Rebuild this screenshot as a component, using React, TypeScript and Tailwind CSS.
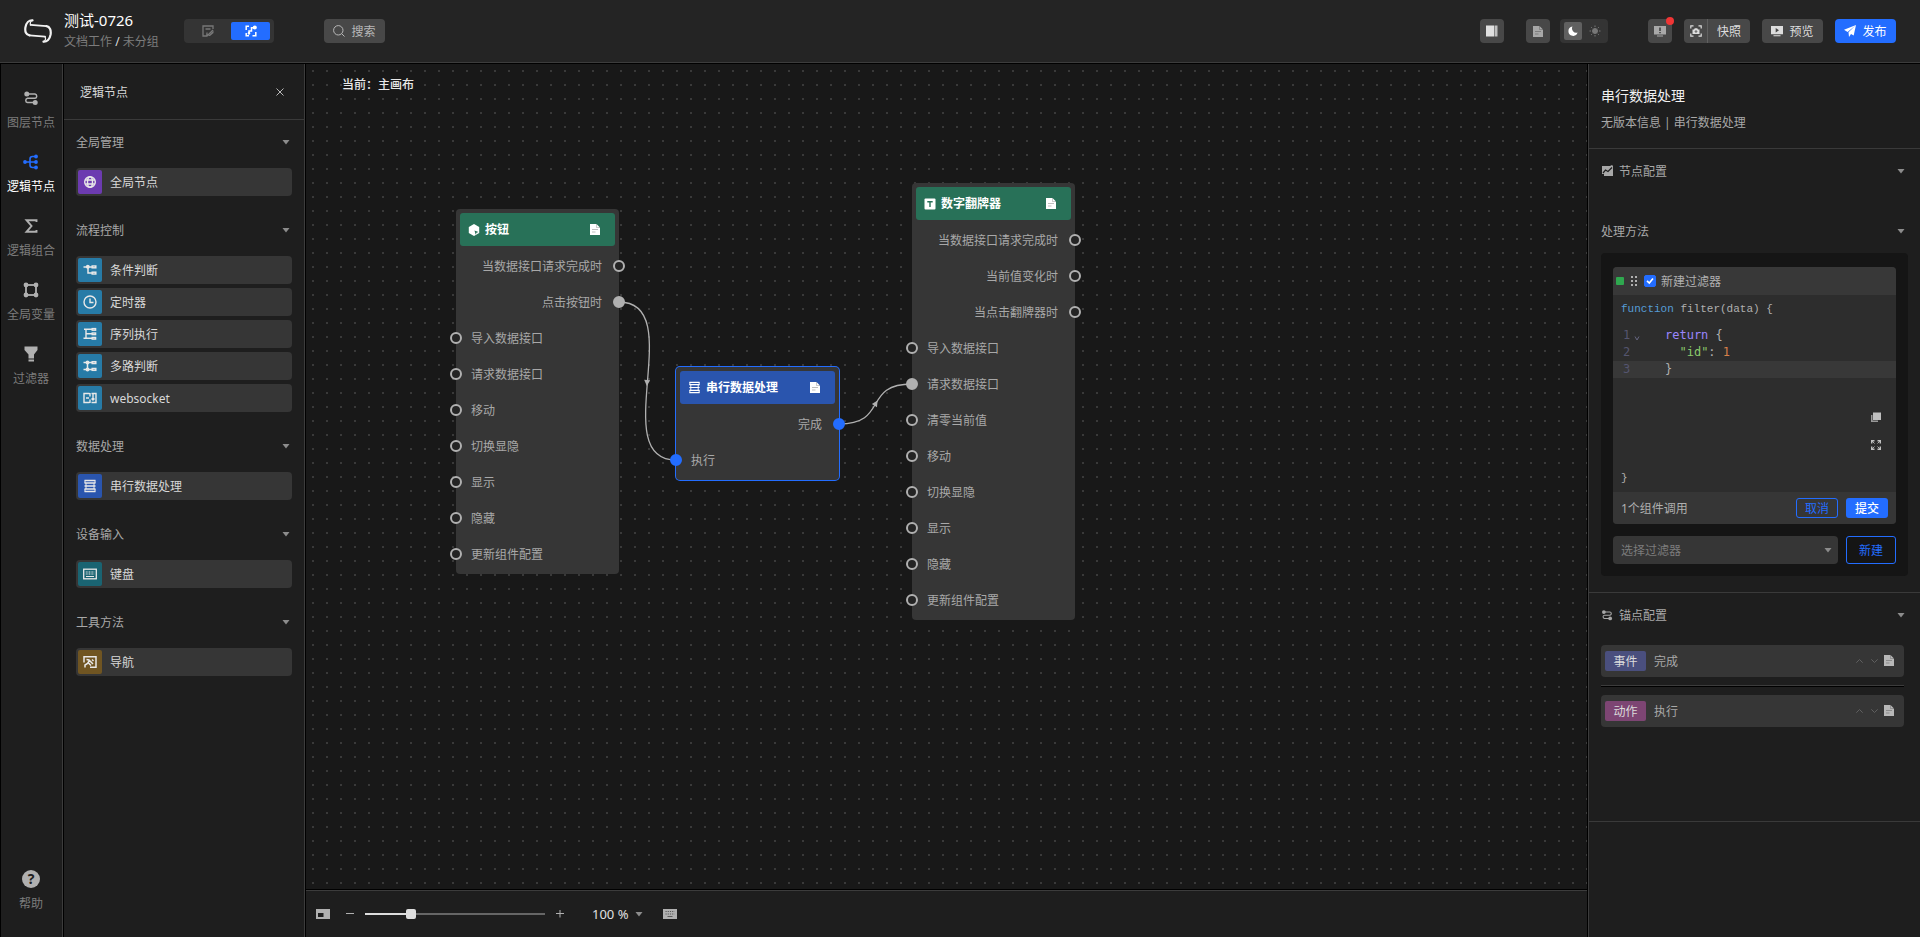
import { useState } from "react";
import type { ReactNode } from "react";

type IconProps = { className?: string };

interface PaletteItem {
  label: string;
  icon: ReactNode;
}

interface PaletteGroup {
  title: string;
  color: string;
  items: PaletteItem[];
}

interface Port {
  label: string;
  linked?: boolean;
}

interface FlowNodeProps {
  title: string;
  icon: ReactNode;
  place: string;
  headerClass: string;
  selected?: boolean;
  outputs: Port[];
  inputs: Port[];
}

/* ---------- icons ---------- */

function Logo({ className }: IconProps) {
  return (
    <svg viewBox="0 0 28 24" className={className} fill="none" stroke="#f2f2f2" strokeLinecap="round">
      <path d="M8.500 1.300C5 1 2.200 4 1.400 8.500C.8 12.500 2 15.800 5.500 16.300" strokeWidth="2.200" />
      <path d="M19.500 22.700C23 23 25.800 20 26.600 15.500C27.200 11.500 26 7.600 22.500 7.200" strokeWidth="2.200" />
      <path d="M5.500 16.300L21 17.600M22.500 7.200L6.500 5.800" strokeWidth="1.700" />
      <path d="M8.500 1.300C6.500 2.200 6 4 6.500 5.800M19.500 22.700C21.500 21.800 21.800 19.500 21 17.600" strokeWidth="1.200" />
    </svg>
  );
}

function DocIcon({ className }: IconProps) {
  return (
    <svg viewBox="0 0 10 11" className={className}>
      <path d="M0 0H6.500L10 3.500V11H0Z" fill="currentColor" />
      <path d="M6.500 0V3.500H10" fill="none" stroke="#000" strokeOpacity=".25" strokeWidth=".8" />
      <path d="M2 5.500H8M2 8H5.500" stroke="#000" strokeOpacity=".25" strokeWidth="1" />
    </svg>
  );
}

function Caret({ className = "text-[#8c8c8c]" }: IconProps) {
  return (
    <svg viewBox="0 0 8 5" className={`h-[5px] w-2 shrink-0 ${className}`}>
      <path d="M.500 0H7.500L4 4.500Z" fill="currentColor" />
    </svg>
  );
}

function LayersIcon({ className }: IconProps) {
  return (
    <svg viewBox="0 0 16 16" className={className} fill="none" stroke="currentColor" strokeWidth="1.500">
      <path d="M3 4H12A2.200 2.200 0 0 1 12 8.300H4.500A2.200 2.200 0 0 0 4.500 12.600H12" />
      <circle cx="3.800" cy="4" r="2.500" fill="currentColor" stroke="none" />
      <circle cx="12.200" cy="12.500" r="2.500" fill="currentColor" stroke="none" />
    </svg>
  );
}

function LogicIcon({ className }: IconProps) {
  return (
    <svg viewBox="0 0 16 16" className={className} fill="none" stroke="currentColor" strokeWidth="1.600">
      <path d="M2 8H13M13 2.500H9.500Q7 2.500 7 5V11Q7 13.500 9.500 13.500H13" />
      <g fill="currentColor" stroke="none">
        <circle cx="2" cy="8" r="1.900" />
        <circle cx="13" cy="2.500" r="1.900" />
        <circle cx="13" cy="8" r="1.900" />
        <circle cx="13" cy="13.500" r="1.900" />
      </g>
    </svg>
  );
}

function SigmaIcon({ className }: IconProps) {
  return (
    <svg viewBox="0 0 16 16" className={className} fill="none" stroke="currentColor" strokeWidth="1.900">
      <path d="M13.500 4V2.200H3.500L8.500 8L3.500 13.800H13.500V12" />
    </svg>
  );
}

function FrameIcon({ className }: IconProps) {
  return (
    <svg viewBox="0 0 16 16" className={className} fill="none" stroke="currentColor" strokeWidth="1.800">
      <rect x="3" y="3" width="10" height="10" />
      <g fill="currentColor" stroke="none">
        <circle cx="3" cy="3" r="2.400" />
        <circle cx="13" cy="3" r="2.400" />
        <circle cx="3" cy="13" r="2.400" />
        <circle cx="13" cy="13" r="2.400" />
      </g>
    </svg>
  );
}

function FunnelIcon({ className }: IconProps) {
  return (
    <svg viewBox="0 0 16 16" className={className} fill="currentColor">
      <path d="M1.500 .500H14.500V4L11 8.500V12.500H5.500V8.500L1.500 4Z" />
      <path d="M5.500 13.500H11V15.500H5.500Z" />
    </svg>
  );
}

function GlobeIcon({ className = "size-[14px]" }: IconProps) {
  return (
    <svg viewBox="0 0 14 14" className={className} fill="none" stroke="currentColor" strokeWidth="1.400">
      <circle cx="7" cy="7" r="5.300" />
      <ellipse cx="7" cy="7" rx="2.500" ry="5.300" />
      <path d="M2.200 5H11.800M2.200 9H11.800" />
    </svg>
  );
}

function BranchIcon({ className = "size-[14px]" }: IconProps) {
  return (
    <svg viewBox="0 0 14 14" className={className} fill="none" stroke="currentColor" strokeWidth="1.500">
      <path d="M.500 4H9M5 4V10H9" />
      <circle cx="4.800" cy="3.800" r="1.200" fill="currentColor" />
      <rect x="9.200" y="3" width="3.600" height="1.800" />
      <rect x="9.200" y="9.200" width="3.600" height="1.800" />
    </svg>
  );
}

function ClockIcon({ className = "size-[14px]" }: IconProps) {
  return (
    <svg viewBox="0 0 14 14" className={className} fill="none" stroke="currentColor" strokeWidth="1.400">
      <circle cx="7" cy="7" r="6" />
      <path d="M7 3.500V7.500H10.500" />
    </svg>
  );
}

function SequenceIcon({ className = "size-[14px]" }: IconProps) {
  return (
    <svg viewBox="0 0 14 14" className={className} fill="none" stroke="currentColor" strokeWidth="1.400">
      <path d="M1 2.300H9M.500 11.300H9M3 2.300V11.300M3 6.800H9" />
      <rect x="9.200" y="1.600" width="3.400" height="1.600" />
      <rect x="9.200" y="6" width="3.400" height="1.600" />
      <rect x="9.200" y="10.500" width="3.400" height="1.600" />
    </svg>
  );
}

function MultiIcon({ className = "size-[14px]" }: IconProps) {
  return (
    <svg viewBox="0 0 14 14" className={className} fill="none" stroke="currentColor" strokeWidth="1.500">
      <path d="M.500 3.500H9M.500 10.500H9M4.500 3.500V10.500" />
      <circle cx="4.500" cy="3.500" r="1.200" fill="currentColor" />
      <circle cx="4.500" cy="10.500" r="1.200" fill="currentColor" />
      <rect x="9.200" y="2.700" width="3.600" height="1.800" />
      <rect x="9.200" y="9.500" width="3.600" height="1.800" />
    </svg>
  );
}

function SocketIcon({ className = "size-[14px]" }: IconProps) {
  return (
    <svg viewBox="0 0 14 14" className={className} fill="none" stroke="currentColor" strokeWidth="1.400">
      <path d="M6.500 2.500H1V11.500H6.500M7 2V5.500M7 8.500V12M3 7H6M8.500 2.500H13V11.500H8.500M10 3V9M8.500 7.500L10 9L11.500 7.500" />
    </svg>
  );
}

function SerialIcon({ className = "size-[14px]" }: IconProps) {
  return (
    <svg viewBox="0 0 14 14" className={className} fill="none" stroke="currentColor" strokeWidth="1.300">
      <path d="M1.500 1.500H12.500M1.500 4H12.500M1.500 7H12.500M1.500 10H12.500M1.500 12.500H12.500" />
      <path d="M2 1.500V4M12 1.500V4M2 10V12.500M12 10V12.500M3 4V10M11 4V10" strokeWidth="1" />
    </svg>
  );
}

function KeyboardIcon({ className = "size-[14px]" }: IconProps) {
  return (
    <svg viewBox="0 0 14 14" className={className} fill="none" stroke="currentColor">
      <rect x=".700" y="2.200" width="12.600" height="9.600" strokeWidth="1.300" />
      <path d="M2.800 5H11.200M2.800 7H11.200" strokeDasharray="1 .600" strokeWidth="1.100" />
      <path d="M3 9.500H11" strokeWidth="1" />
    </svg>
  );
}

function NavIcon({ className = "size-[14px]" }: IconProps) {
  return (
    <svg viewBox="0 0 14 14" className={className} fill="none" stroke="currentColor" strokeWidth="1.500">
      <path d="M1 7.500V1.800H13V12.200H7" />
      <path d="M3.500 4.500L6 5L10 9M6.500 5.500L4.500 8.500L2 10V12.500M5.500 8L8 10.500M9 4.500L10.500 6" />
    </svg>
  );
}

/* ---------- data ---------- */

const railItems = [
  { label: "图层节点", icon: <LayersIcon className="size-4" /> },
  { label: "逻辑节点", icon: <LogicIcon className="size-4" />, active: true },
  { label: "逻辑组合", icon: <SigmaIcon className="size-4" /> },
  { label: "全局变量", icon: <FrameIcon className="size-4" /> },
  { label: "过滤器", icon: <FunnelIcon className="size-4" /> },
];

const groups: PaletteGroup[] = [
  { title: "全局管理", color: "bg-[#6c3bb0]", items: [{ label: "全局节点", icon: <GlobeIcon /> }] },
  {
    title: "流程控制",
    color: "bg-[#277ba7]",
    items: [
      { label: "条件判断", icon: <BranchIcon /> },
      { label: "定时器", icon: <ClockIcon /> },
      { label: "序列执行", icon: <SequenceIcon /> },
      { label: "多路判断", icon: <MultiIcon /> },
      { label: "websocket", icon: <SocketIcon /> },
    ],
  },
  { title: "数据处理", color: "bg-[#2a55ae]", items: [{ label: "串行数据处理", icon: <SerialIcon /> }] },
  { title: "设备输入", color: "bg-[#1a6472]", items: [{ label: "键盘", icon: <KeyboardIcon /> }] },
  { title: "工具方法", color: "bg-[#705522]", items: [{ label: "导航", icon: <NavIcon /> }] },
];

const anchors = [
  { tag: "事件", name: "完成", color: "bg-[#4a4f7e]" },
  { tag: "动作", name: "执行", color: "bg-[#7d4573]" },
];

/* ---------- header ---------- */

function Header() {
  return (
    <header className="flex h-16 shrink-0 items-center border-b border-black bg-[#242424] px-6 pb-px shadow-[inset_0_-1px_0_#3c3c3c]">
      <Logo className="h-6 w-7" />
      <div className="ml-3 w-[120px]">
        <h1 className="text-[15px] leading-[22px] text-white">测试-0726</h1>
        <p className="leading-[22px] text-[#7c7c7c]">
          文档工作 <span className="text-[#ddd]">/</span> 未分组
        </p>
      </div>
      <div className="flex h-6 w-[90px] items-center rounded bg-[#343434] py-[3px] pr-1">
        <button type="button" aria-label="页面" className="flex h-full flex-1 items-center justify-center text-[#777]">
          <svg viewBox="0 0 12 12" className="size-3" fill="none" stroke="currentColor" strokeWidth="1.300">
            <path d="M11 4V1H1V11H5L11 5M3.500 4H8.500M5 7.500L4.800 11" />
            <path d="M6 11L11.500 5.500V8L8 11Z" fill="currentColor" stroke="none" />
          </svg>
        </button>
        <button type="button" aria-label="蓝图" className="flex h-full w-[39px] items-center justify-center rounded-xs bg-[#236dff] text-white">
          <svg viewBox="0 0 12 12" className="size-3" fill="none" stroke="currentColor" strokeWidth="1.500">
            <path d="M4 1.200H1.200V5M1.200 8V10.800H4M7.500 10.800H10.800V7M4 8.300V6H6.500V2.700H9" />
            <circle cx="9.800" cy="2.500" r="1.300" fill="currentColor" />
            <circle cx="4" cy="8.300" r=".600" />
          </svg>
        </button>
      </div>
      <button type="button" className="ml-[50px] flex h-6 w-[61px] items-center justify-center gap-[6px] rounded bg-[#484848] text-[#b8b8b8]">
        <svg viewBox="0 0 12 12" className="size-3" fill="none" stroke="currentColor">
          <circle cx="5.300" cy="5.300" r="4.700" />
          <path d="M8.600 8.600L11.500 11.500" />
        </svg>
        <span className="pt-0.5">搜索</span>
      </button>

      <div className="ml-auto flex h-6 items-center text-[#ddd]">
        <button type="button" aria-label="侧栏" className="flex size-6 items-center justify-center rounded bg-[#484848]">
          <svg viewBox="0 0 12 12" className="size-3">
            <path d="M0 .500H8V11.500H0Z" fill="#e0e0e0" />
            <path d="M8.500 .500H11.500V11.500H8.500Z" fill="#c0c0c0" />
          </svg>
        </button>
        <button type="button" aria-label="文档" className="ml-[22px] flex size-6 items-center justify-center rounded bg-[#484848] text-[#a8a8a8]">
          <DocIcon className="h-[11px] w-[10px]" />
        </button>
        <div className="ml-[10px] flex h-6 w-12 items-center gap-1 rounded bg-[#343434] px-1">
          <button type="button" aria-label="深色" className="flex size-[18px] items-center justify-center rounded-xs bg-[#606060] text-white">
            <svg viewBox="0 0 10 10" className="size-[10px]">
              <path d="M4.500 .500A4.700 4.700 0 1 0 9.600 6.600A4.300 4.300 0 0 1 4.500 .500Z" fill="currentColor" />
            </svg>
          </button>
          <button type="button" aria-label="浅色" className="flex size-[18px] items-center justify-center text-[#777]">
            <svg viewBox="0 0 12 12" className="size-3" stroke="currentColor">
              <circle cx="6" cy="6" r="2.500" fill="currentColor" />
              <path d="M6 .500V2M6 10V11.500M.500 6H2M10 6H11.500M2.200 2.200L3.200 3.200M8.800 8.800L9.800 9.800M9.800 2.200L8.800 3.200M3.200 8.800L2.200 9.800" />
            </svg>
          </button>
        </div>
        <button type="button" aria-label="消息" className="relative ml-10 flex size-6 items-center justify-center rounded bg-[#484848] text-[#a8a8a8]">
          <svg viewBox="0 0 12 12" className="size-3">
            <path d="M0 1H12V9.500H0ZM3 10.500H9V11.500H3Z" fill="currentColor" />
            <path d="M6 2.500V6M6 7V8.300" stroke="#333" strokeWidth="1.400" />
          </svg>
          <span className="absolute -right-[2px] -top-[2px] size-2 rounded-full bg-[#f03535]" />
        </button>
        <div className="ml-3 flex h-6 w-[66px] overflow-hidden rounded bg-[#484848]">
          <button type="button" aria-label="截图" className="flex w-6 items-center justify-center border-r border-[#606060]">
            <svg viewBox="0 0 12 12" className="size-3" fill="none" stroke="currentColor" strokeWidth="1.200">
              <path d="M.800 3.500V.800H3.500M8.500 .800H11.200V3.500M11.200 8.500V11.200H8.500M3.500 11.200H.800V8.500" />
              <path d="M2.500 4.500H4L4.700 3.300H7.300L8 4.500H9.500V9H2.500Z" fill="currentColor" stroke="none" />
              <circle cx="6" cy="6.500" r=".800" stroke="#484848" strokeWidth=".9" />
            </svg>
          </button>
          <button type="button" className="flex-1 pt-0.5">快照</button>
        </div>
        <button type="button" className="ml-3 flex h-6 w-[61px] items-center justify-center gap-[6px] rounded bg-[#484848]">
          <svg viewBox="0 0 12 12" className="size-3">
            <path d="M0 1H12V9.300H0ZM2.500 10.300H9.500V11.300H2.500Z" fill="currentColor" />
            <path d="M4.700 3L8 5.200L4.700 7.400Z" fill="#484848" />
          </svg>
          <span className="pt-0.5">预览</span>
        </button>
        <button type="button" className="ml-3 flex h-6 w-[61px] items-center justify-center gap-[6px] rounded bg-[#236dff] text-white">
          <svg viewBox="0 0 12 12" className="size-3">
            <path d="M12 0L0 4.800L3.600 7ZM12 0L4.500 7.300L5 12L7 9L9.700 10.500Z" fill="currentColor" />
          </svg>
          <span className="pt-0.5">发布</span>
        </button>
      </div>
    </header>
  );
}

/* ---------- left side ---------- */

function Rail() {
  return (
    <nav className="flex w-16 shrink-0 flex-col border-l border-r border-black bg-[#1e1e1e] pb-[25px] pr-[2px] pt-[14px] shadow-[inset_-1px_0_0_#3c3c3c]">
      {railItems.map((item) => (
        <button key={item.label} type="button" className={`flex h-16 flex-col items-center justify-center gap-[9px] leading-4 ${item.active ? "text-white" : "text-[#7c7c7c]"}`}>
          <span className={item.active ? "text-[#236dff]" : "text-[#b0b0b0]"}>{item.icon}</span>
          {item.label}
        </button>
      ))}
      <button type="button" className="mt-auto flex flex-col items-center gap-2 leading-4 text-[#7c7c7c]">
        <span className="flex size-[18px] items-center justify-center rounded-full bg-[#b0b0b0] text-sm font-bold text-[#1e1e1e]">?</span>
        帮助
      </button>
    </nav>
  );
}

function Palette() {
  return (
    <aside className="w-[242px] shrink-0 border-r border-black bg-[#1e1e1e] shadow-[inset_-1px_0_0_#3c3c3c]">
      <div className="flex h-14 items-center justify-between border-b border-[#3a3a3a] pl-4 pr-[21px]">
        <h2 className="pt-0.5 text-[#d8d8d8]">逻辑节点</h2>
        <button type="button" aria-label="关闭" className="text-[#b8b8b8]">
          <svg viewBox="0 0 8 8" className="size-2" stroke="currentColor">
            <path d="M.500 .500L7.500 7.500M7.500 .500L.500 7.500" />
          </svg>
        </button>
      </div>
      {groups.map((group) => (
        <section key={group.title} className="mb-3 px-3">
          <button type="button" className="mb-1 flex h-11 w-full items-center justify-between pr-[3px] text-[#a8a8a8]">
            <span className="pt-0.5">{group.title}</span>
            <Caret />
          </button>
          <ul className="flex w-[216px] flex-col gap-1">
            {group.items.map((item) => (
              <li key={item.label} className="flex h-7 items-center gap-2 rounded bg-[#363636] pl-[2px] text-[#d8d8d8]">
                <span className={`flex size-6 items-center justify-center rounded-xs text-[#e8e8e8] ${group.color}`}>{item.icon}</span>
                <span className="pt-0.5">{item.label}</span>
              </li>
            ))}
          </ul>
        </section>
      ))}
    </aside>
  );
}

/* ---------- canvas ---------- */

function PortDot({ linked, selected, side }: { linked?: boolean; selected?: boolean; side: "left" | "right" }) {
  const fill = selected ? "border-[#236dff] bg-[#236dff]" : linked ? "border-[#b0b0b0] bg-[#b0b0b0]" : "border-[#b0b0b0] bg-[#242424]";
  return <span className={`absolute top-3 size-3 rounded-full border-2 ${side === "left" ? "-left-[6px]" : "-right-[6px]"} ${fill}`} />;
}

function FlowNode({ title, icon, place, headerClass, selected, outputs, inputs }: FlowNodeProps) {
  return (
    <div className={`absolute w-[163px] rounded bg-[#363636] pb-[2px] pt-1 text-[#a8a8a8] ${place} ${selected ? "ring-1 ring-[#236dff]" : ""}`}>
      <div className={`mx-1 mb-[2px] flex h-[33px] items-center rounded-[3px] pl-2 pr-[15px] font-bold text-white ${headerClass}`}>
        {icon}
        <span className="ml-[5px]">{title}</span>
        <DocIcon className="ml-auto h-[11px] w-[10px]" />
      </div>
      {outputs.map((port) => (
        <div key={port.label} className="relative flex h-9 items-center justify-end pr-[17px] pt-0.5">
          {port.label}
          <PortDot side="right" linked={port.linked} selected={selected} />
        </div>
      ))}
      {inputs.map((port) => (
        <div key={port.label} className="relative flex h-9 items-center pl-[15px] pt-0.5">
          {port.label}
          <PortDot side="left" linked={port.linked} selected={selected} />
        </div>
      ))}
    </div>
  );
}

function Canvas() {
  return (
    <div className="relative min-h-0 flex-1 overflow-hidden bg-[#181818]">
      <svg className="absolute inset-0 h-full w-full" fill="none">
        <defs>
          <pattern id="dots" x="6" y="6" width="14" height="14" patternUnits="userSpaceOnUse">
            <circle cx="1" cy="1" r="1" fill="#444" />
          </pattern>
        </defs>
        <rect width="100%" height="100%" fill="url(#dots)" />
        <g stroke="#b0b0b0" strokeWidth="1.300">
          <path d="M313 238C383 238 300 396 370 396" />
          <path d="M533 360C583 360 556 320 606 320" />
        </g>
        <g fill="#b0b0b0">
          <path d="M-3 -3L3 0L-3 3Z" transform="translate(341 319) rotate(93)" />
          <path d="M-3 -3L3 0L-3 3Z" transform="translate(570 339) rotate(-58)" />
        </g>
      </svg>
      <p className="relative px-9 pt-3 font-medium leading-[18px] text-[#e8e8e8]">当前：主画布</p>
      <FlowNode
        title="按钮"
        place="left-[150px] top-[145px]"
        headerClass="bg-[#287158]"
        icon={
          <svg viewBox="0 0 12 12" className="size-3">
            <path d="M6 0L11.200 3V9L6 12L.800 9V3Z" fill="currentColor" />
            <path d="M6.500 6.500L10.500 8L8.500 8.800L7.700 10.800Z" fill="#287158" />
          </svg>
        }
        outputs={[{ label: "当数据接口请求完成时" }, { label: "点击按钮时", linked: true }]}
        inputs={[{ label: "导入数据接口" }, { label: "请求数据接口" }, { label: "移动" }, { label: "切换显隐" }, { label: "显示" }, { label: "隐藏" }, { label: "更新组件配置" }]}
      />
      <FlowNode
        title="串行数据处理"
        place="left-[370px] top-[303px]"
        headerClass="bg-[#2a55ae]"
        selected
        icon={<SerialIcon className="size-[13px]" />}
        outputs={[{ label: "完成", linked: true }]}
        inputs={[{ label: "执行", linked: true }]}
      />
      <FlowNode
        title="数字翻牌器"
        place="left-[606px] top-[119px]"
        headerClass="bg-[#287158]"
        icon={
          <svg viewBox="0 0 12 12" className="size-3">
            <rect x=".500" y=".500" width="11" height="11" rx="1" fill="currentColor" />
            <path d="M3.300 3.700H8.700M6 3.700V9" stroke="#287158" strokeWidth="1.400" />
          </svg>
        }
        outputs={[{ label: "当数据接口请求完成时" }, { label: "当前值变化时" }, { label: "当点击翻牌器时" }]}
        inputs={[
          { label: "导入数据接口" },
          { label: "请求数据接口", linked: true },
          { label: "清零当前值" },
          { label: "移动" },
          { label: "切换显隐" },
          { label: "显示" },
          { label: "隐藏" },
          { label: "更新组件配置" },
        ]}
      />
    </div>
  );
}

function ZoomBar() {
  return (
    <div className="flex h-12 shrink-0 items-center border-t border-black bg-[#1e1e1e] pl-[10px] pt-px text-[#b0b0b0] shadow-[inset_0_1px_0_#3c3c3c]">
      <button type="button" aria-label="小地图">
        <svg viewBox="0 0 14 10" className="h-[10px] w-[14px]">
          <rect width="14" height="10" fill="currentColor" />
          <rect x="2" y="4" width="5.500" height="4" fill="#1e1e1e" />
        </svg>
      </button>
      <button type="button" aria-label="缩小" className="ml-3 flex w-4 justify-center">
        <svg viewBox="0 0 8 8" className="size-2" stroke="currentColor"><path d="M0 3.500H8" /></svg>
      </button>
      <input
        type="range"
        aria-label="缩放"
        defaultValue={24}
        className="ml-[7px] h-[2px] w-[180px] appearance-none bg-[linear-gradient(to_right,#dddddd_25%,#666666_25%)] [&::-webkit-slider-thumb]:h-[10px] [&::-webkit-slider-thumb]:w-[10px] [&::-webkit-slider-thumb]:appearance-none [&::-webkit-slider-thumb]:rounded-xs [&::-webkit-slider-thumb]:bg-[#dddddd]"
      />
      <button type="button" aria-label="放大" className="ml-[7px] flex w-4 justify-center">
        <svg viewBox="0 0 8 8" className="size-2" stroke="currentColor"><path d="M0 3.500H8M4 0V7.500" /></svg>
      </button>
      <div className="relative ml-6 flex items-center">
        <select aria-label="缩放比例" className="w-[51px] appearance-none bg-transparent text-[13px] leading-5 text-[#e0e0e0]">
          <option>100 %</option>
        </select>
        <Caret className="pointer-events-none absolute right-0 text-[#8c8c8c]" />
      </div>
      <button type="button" aria-label="快捷键" className="ml-5">
        <svg viewBox="0 0 14 10" className="h-[10px] w-[14px]">
          <rect width="14" height="10" fill="currentColor" />
          <path d="M2.500 2.500H11.500M2.500 5H11.500" stroke="#1e1e1e" strokeOpacity=".6" strokeDasharray="1.200 1" />
          <path d="M4.500 7.500H9.500" stroke="#1e1e1e" strokeOpacity=".6" />
        </svg>
      </button>
    </div>
  );
}

/* ---------- right side ---------- */

function FilterCard() {
  const [enabled, setEnabled] = useState(true);

  return (
    <div className="overflow-hidden rounded bg-[#2d2d2d] text-[#b0b0b0]">
      <div className="flex h-7 items-center bg-[#383838] pl-[3px]">
        <span className="size-2 rounded-[1px] bg-[#2fa84f]" />
        <svg viewBox="0 0 8 12" className="ml-[6px] h-3 w-2" fill="currentColor">
          <path d="M1 1H3V3H1ZM1 5H3V7H1ZM1 9H3V11H1ZM5 1H7V3H5ZM5 5H7V7H5ZM5 9H7V11H5Z" />
        </svg>
        <label className="ml-[6px] flex items-center gap-[5px]">
          <span className="relative flex size-3">
            <input type="checkbox" checked={enabled} onChange={(e) => setEnabled(e.target.checked)} className="peer size-3 appearance-none rounded-xs border border-[#666] checked:border-[#236dff] checked:bg-[#236dff]" />
            <svg viewBox="0 0 12 12" className="pointer-events-none absolute inset-0 hidden size-3 peer-checked:block" fill="none" stroke="#fff" strokeWidth="1.600">
              <path d="M3 5.800L5.300 8L9 3.500" />
            </svg>
          </span>
          <span className="pt-0.5">新建过滤器</span>
        </label>
      </div>
      <div className="relative py-[6px] font-['Liberation_Mono','DejaVu_Sans_Mono',monospace] text-[11px]">
        <p className="px-2 leading-4">
          <span className="text-[#569cd6]">function</span> filter(data) {"{"}
        </p>
        <ol className="mb-[92px] mt-[10px] font-['DejaVu_Sans_Mono','Liberation_Mono',monospace] text-[12px] leading-[17px]">
          <li className="flex">
            <span className="w-[21px] pl-[10px] text-[#55556f]">1</span>
            <svg viewBox="0 0 5 5" className="mr-[25px] mt-[9px] h-[5px] w-[6px]" fill="none" stroke="#666680"><path d="M.500 .500L2.500 4L4.500 .500" /></svg>
            <pre className="font-[inherit]"><span className="text-[#9a86fd]">return</span> {"{"}</pre>
          </li>
          <li className="flex">
            <span className="w-[52px] pl-[10px] text-[#55556f]">2</span>
            <pre className="font-[inherit]">{"  "}<span className="text-[#8bc96b]">"id"</span>: <span className="text-[#d8804a]">1</span></pre>
          </li>
          <li className="flex bg-[#383838]">
            <span className="w-[52px] pl-[10px] text-[#55556f]">3</span>
            <pre className="font-[inherit]">{"}"}</pre>
          </li>
        </ol>
        <p className="px-2 leading-4">{"}"}</p>
        <div className="absolute bottom-[42px] right-[15px] flex flex-col gap-[18px] text-[#c0c0c0]">
          <button type="button" aria-label="复制">
            <svg viewBox="0 0 10 10" className="size-[10px]">
              <path d="M0 3H1.500V8.500H7V10H0Z" fill="#999" />
              <path d="M2 .500H10V8H2Z" fill="currentColor" />
            </svg>
          </button>
          <button type="button" aria-label="全屏">
            <svg viewBox="0 0 10 10" className="size-[10px]" fill="none" stroke="currentColor" strokeWidth="1.400">
              <path d="M.700 3.500V.700H3.500M6.500 .700H9.300V3.500M9.300 6.500V9.300H6.500M3.500 9.300H.700V6.500" />
              <path d="M1 1L3.500 3.500M9 1L6.500 3.500M9 9L6.500 6.500M1 9L3.500 6.500" strokeWidth=".9" />
            </svg>
          </button>
        </div>
      </div>
      <div className="flex h-8 items-center gap-2 bg-[#363636] px-2">
        <span className="mr-auto pt-0.5">1个组件调用</span>
        <button type="button" className="h-5 w-[42px] rounded-[3px] border border-[#236dff] pt-px leading-4 text-[#236dff]">取消</button>
        <button type="button" className="h-5 w-[42px] rounded-[3px] bg-[#236dff] pt-px font-medium leading-4 text-white">提交</button>
      </div>
    </div>
  );
}

function Inspector() {
  return (
    <aside className="w-[333px] shrink-0 border-l border-black bg-[#1e1e1e] text-[#a8a8a8] shadow-[inset_1px_0_0_#3c3c3c]">
      <div className="ml-px h-[85px] border-b border-[#3a3a3a] pl-3 pt-[21px]">
        <h2 className="text-sm leading-[22px] text-[#f0f0f0]">串行数据处理</h2>
        <p className="mt-1 leading-6">无版本信息 | 串行数据处理</p>
      </div>
      <section className="ml-px border-b border-[#3a3a3a] px-3 pb-4">
        <button type="button" className="flex h-11 w-full items-center pr-[3px]">
          <svg viewBox="0 0 12 12" className="mr-[6px] size-3">
            <path d="M1 1H9L11 0L12 1V11H3V9H1Z" fill="currentColor" />
            <path d="M2 8L4.500 5L7 6.500L11 2.500" fill="none" stroke="#1e1e1e" strokeWidth="1.200" />
          </svg>
          <span className="pt-0.5">节点配置</span>
          <span className="ml-auto"><Caret /></span>
        </button>
        <button type="button" className="mt-4 flex h-11 w-full items-center justify-between pr-[3px]">
          <span className="pt-0.5">处理方法</span>
          <Caret />
        </button>
        <div className="rounded bg-[#151515] px-3 pb-3 pt-[14px]">
          <FilterCard />
          <div className="mt-3 flex gap-2">
            <div className="relative flex flex-1 items-center">
              <select aria-label="选择过滤器" className="h-7 w-full appearance-none rounded bg-[#363636] px-2 pt-0.5 text-[#7c7c7c]">
                <option>选择过滤器</option>
              </select>
              <Caret className="pointer-events-none absolute right-[6px] text-[#8c8c8c]" />
            </div>
            <button type="button" className="h-7 w-[50px] rounded-[3px] border border-[#236dff] pt-0.5 text-[#236dff]">新建</button>
          </div>
        </div>
      </section>
      <section className="ml-px border-b border-[#3a3a3a] px-3 pb-[94px]">
        <button type="button" className="flex h-11 w-full items-center pr-[3px]">
          <LayersIcon className="mr-[6px] size-3" />
          <span className="pt-0.5">锚点配置</span>
          <span className="ml-auto"><Caret /></span>
        </button>
        <ul className="mr-1 mt-2 divide-y divide-black">
          {anchors.map((anchor, i) => (
            <li key={anchor.tag} className={i === 0 ? "pb-[9px] shadow-[inset_0_-1px_0_#3c3c3c]" : "pt-2"}>
              <div className="flex h-8 items-center rounded bg-[#363636] pl-1 pr-[10px]">
                <span className={`flex h-5 w-[41px] items-center justify-center rounded-xs pt-px text-[#dcdcdc] ${anchor.color}`}>{anchor.tag}</span>
                <span className="ml-2 mr-auto pt-0.5">{anchor.name}</span>
                <button type="button" aria-label="上移" className="mr-2 text-[#606060]">
                  <svg viewBox="0 0 7 4" className="h-1 w-[7px]" fill="none" stroke="currentColor"><path d="M.300 3.700L3.500 .500L6.700 3.700" /></svg>
                </button>
                <button type="button" aria-label="下移" className="mr-[6px] text-[#606060]">
                  <svg viewBox="0 0 7 4" className="h-1 w-[7px]" fill="none" stroke="currentColor"><path d="M.300 .300L3.500 3.500L6.700 .300" /></svg>
                </button>
                <button type="button" aria-label="文档" className="pb-0.5 text-[#b8b8b8]">
                  <DocIcon className="h-[11px] w-[10px]" />
                </button>
              </div>
            </li>
          ))}
        </ul>
      </section>
    </aside>
  );
}

export default function App() {
  return (
    <div className="flex min-h-screen flex-col bg-[#1e1e1e] font-['Noto_Sans','Noto_Sans_CJK_SC',sans-serif] text-xs">
      <Header />
      <div className="flex flex-1">
        <Rail />
        <Palette />
        <main className="flex min-w-0 flex-1 flex-col">
          <Canvas />
          <ZoomBar />
        </main>
        <Inspector />
      </div>
    </div>
  );
}
